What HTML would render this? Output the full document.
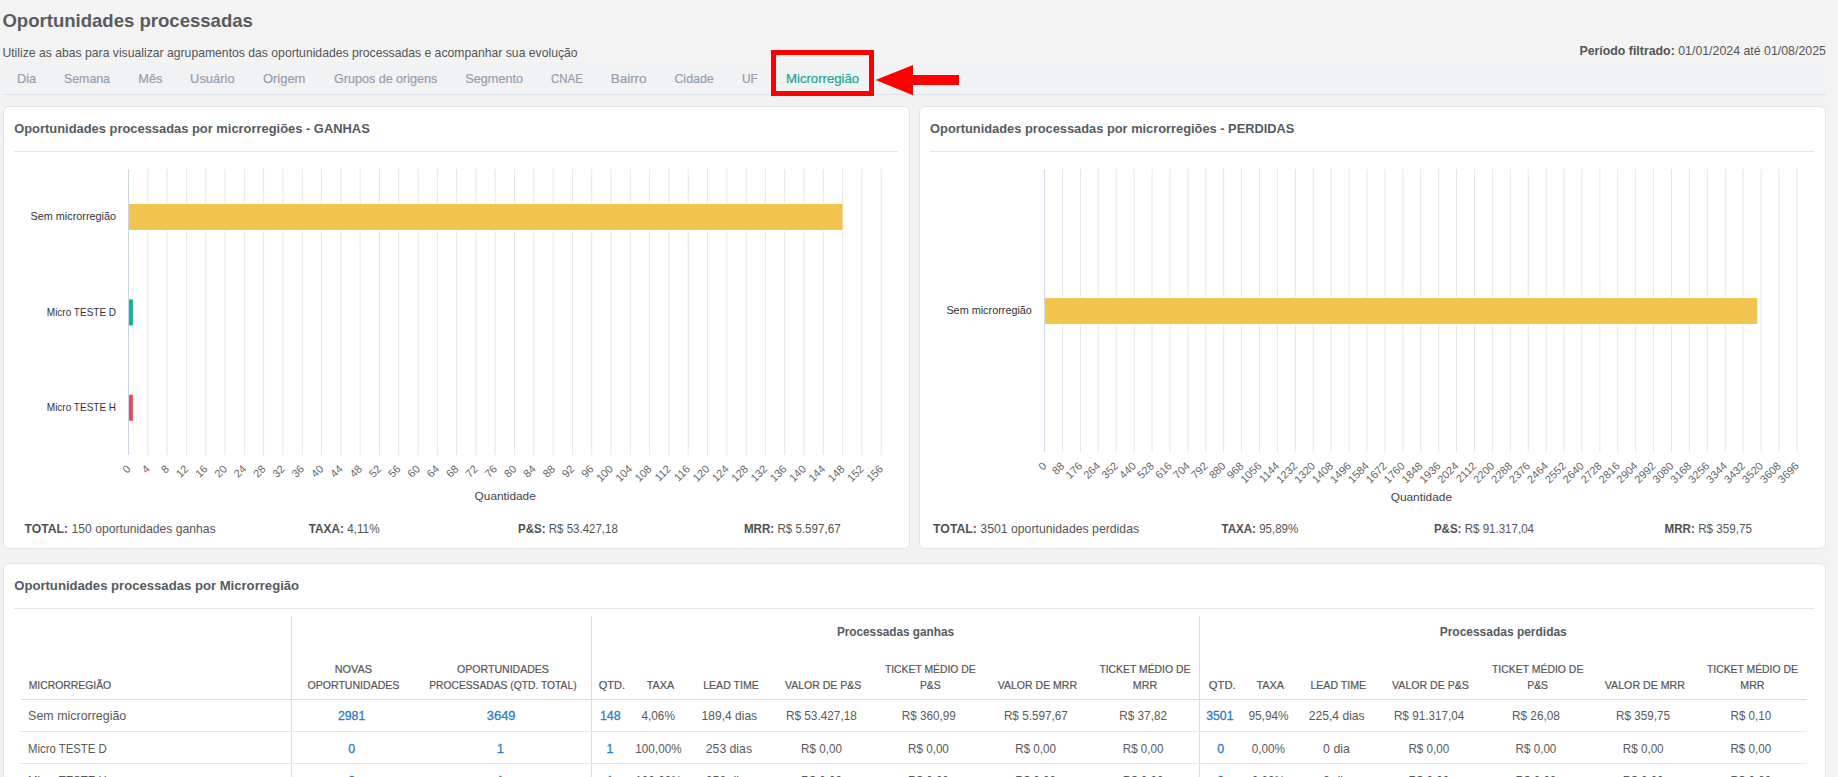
<!DOCTYPE html>
<html><head><meta charset="utf-8"><title>Oportunidades processadas</title>
<style>
*{margin:0;padding:0;box-sizing:border-box}
html,body{width:1838px;height:777px;overflow:hidden;background:#f3f3f3;font-family:"Liberation Sans",sans-serif}
.abs{position:absolute}
.card{position:absolute;background:#fff;border:1px solid #e4e4e4;border-radius:6px}
svg{position:absolute;left:0;top:0}
svg text{font-family:"Liberation Sans",sans-serif}
</style></head>
<body>
<div class="abs" style="left:3px;top:63px;width:1823px;height:714px;background:#f1f2f4"></div>
<div class="abs" style="left:3px;top:94px;width:1823px;height:1px;background:#dde3ea"></div>
<div class="card" style="left:3px;top:106px;width:907px;height:443px"></div>
<div class="card" style="left:919px;top:106px;width:907px;height:443px"></div>
<div class="card" style="left:3px;top:563px;width:1823px;height:300px"></div>
<div class="abs" style="left:14px;top:151px;width:884px;height:1px;background:#e6e6e6"></div>
<div class="abs" style="left:930px;top:151px;width:884px;height:1px;background:#e6e6e6"></div>
<div class="abs" style="left:14px;top:608px;width:1800px;height:1px;background:#e6e6e6"></div>
<div class="abs" style="left:771px;top:50px;width:103px;height:46px;border:5px solid #fe0000"></div>
<div class="abs" style="left:291px;top:616px;width:1px;height:170px;background:#dcdcdc"></div>
<div class="abs" style="left:591px;top:616px;width:1px;height:170px;background:#dcdcdc"></div>
<div class="abs" style="left:1199px;top:616px;width:1px;height:170px;background:#dcdcdc"></div>
<div class="abs" style="left:21px;top:699px;width:1786px;height:1px;background:#dcdcdc"></div>
<div class="abs" style="left:21px;top:731px;width:1786px;height:1px;background:#e4e7ea"></div>
<div class="abs" style="left:21px;top:763px;width:1786px;height:1px;background:#e4e7ea"></div>
<svg width="1838" height="777" viewBox="0 0 1838 777">
<text x="2.40" y="27" font-size="19" fill="#5a5c60" font-weight="bold" textLength="250.50" lengthAdjust="spacingAndGlyphs">Oportunidades processadas</text>
<text x="2.40" y="57" font-size="12.6" fill="#555" textLength="575.20" lengthAdjust="spacingAndGlyphs">Utilize as abas para visualizar agrupamentos das oportunidades processadas e acompanhar sua evolução</text>
<text x="1579.40" y="55" font-size="12.6" fill="#555" textLength="246.50" lengthAdjust="spacingAndGlyphs"><tspan font-weight="bold" fill="#555">Período filtrado:</tspan><tspan font-weight="normal" fill="#555"> 01/01/2024 até 01/08/2025</tspan></text>
<text x="16.90" y="83.3" font-size="12.8" fill="#979eac" stroke="#979eac" stroke-width="0.2" textLength="19.20" lengthAdjust="spacingAndGlyphs">Dia</text>
<text x="64.00" y="83.3" font-size="12.8" fill="#979eac" stroke="#979eac" stroke-width="0.2" textLength="46.00" lengthAdjust="spacingAndGlyphs">Semana</text>
<text x="138.30" y="83.3" font-size="12.8" fill="#979eac" stroke="#979eac" stroke-width="0.2" textLength="24.20" lengthAdjust="spacingAndGlyphs">Mês</text>
<text x="190.10" y="83.3" font-size="12.8" fill="#979eac" stroke="#979eac" stroke-width="0.2" textLength="44.50" lengthAdjust="spacingAndGlyphs">Usuário</text>
<text x="262.90" y="83.3" font-size="12.8" fill="#979eac" stroke="#979eac" stroke-width="0.2" textLength="42.50" lengthAdjust="spacingAndGlyphs">Origem</text>
<text x="334.00" y="83.3" font-size="12.8" fill="#979eac" stroke="#979eac" stroke-width="0.2" textLength="103.30" lengthAdjust="spacingAndGlyphs">Grupos de origens</text>
<text x="465.30" y="83.3" font-size="12.8" fill="#979eac" stroke="#979eac" stroke-width="0.2" textLength="57.80" lengthAdjust="spacingAndGlyphs">Segmento</text>
<text x="551.00" y="83.3" font-size="12.8" fill="#979eac" stroke="#979eac" stroke-width="0.2" textLength="31.80" lengthAdjust="spacingAndGlyphs">CNAE</text>
<text x="610.70" y="83.3" font-size="12.8" fill="#979eac" stroke="#979eac" stroke-width="0.2" textLength="35.90" lengthAdjust="spacingAndGlyphs">Bairro</text>
<text x="674.40" y="83.3" font-size="12.8" fill="#979eac" stroke="#979eac" stroke-width="0.2" textLength="39.40" lengthAdjust="spacingAndGlyphs">Cidade</text>
<text x="742.00" y="83.3" font-size="12.8" fill="#979eac" stroke="#979eac" stroke-width="0.2" textLength="15.90" lengthAdjust="spacingAndGlyphs">UF</text>
<text x="786.00" y="83.3" font-size="12.8" fill="#20a693" stroke="#20a693" stroke-width="0.2" textLength="73.20" lengthAdjust="spacingAndGlyphs">Microrregião</text>
<text x="14.20" y="133.2" font-size="12.3" fill="#555b61" font-weight="bold" textLength="355.60" lengthAdjust="spacingAndGlyphs">Oportunidades processadas por microrregiões - GANHAS</text>
<text x="930.10" y="133.2" font-size="12.3" fill="#555b61" font-weight="bold" textLength="364.30" lengthAdjust="spacingAndGlyphs">Oportunidades processadas por microrregiões - PERDIDAS</text>
<text x="14.20" y="590.4" font-size="12.3" fill="#555b61" font-weight="bold" textLength="284.90" lengthAdjust="spacingAndGlyphs">Oportunidades processadas por Microrregião</text>
<line x1="128.53" y1="169" x2="128.53" y2="455" stroke="#ccd6eb" stroke-width="1"/>
<line x1="147.83" y1="169" x2="147.83" y2="455" stroke="#e6e6e6" stroke-width="1"/>
<line x1="167.13" y1="169" x2="167.13" y2="455" stroke="#e6e6e6" stroke-width="1"/>
<line x1="186.43" y1="169" x2="186.43" y2="455" stroke="#e6e6e6" stroke-width="1"/>
<line x1="205.73" y1="169" x2="205.73" y2="455" stroke="#e6e6e6" stroke-width="1"/>
<line x1="225.03" y1="169" x2="225.03" y2="455" stroke="#e6e6e6" stroke-width="1"/>
<line x1="244.33" y1="169" x2="244.33" y2="455" stroke="#e6e6e6" stroke-width="1"/>
<line x1="263.63" y1="169" x2="263.63" y2="455" stroke="#e6e6e6" stroke-width="1"/>
<line x1="282.93" y1="169" x2="282.93" y2="455" stroke="#e6e6e6" stroke-width="1"/>
<line x1="302.23" y1="169" x2="302.23" y2="455" stroke="#e6e6e6" stroke-width="1"/>
<line x1="321.53" y1="169" x2="321.53" y2="455" stroke="#e6e6e6" stroke-width="1"/>
<line x1="340.83" y1="169" x2="340.83" y2="455" stroke="#e6e6e6" stroke-width="1"/>
<line x1="360.13" y1="169" x2="360.13" y2="455" stroke="#e6e6e6" stroke-width="1"/>
<line x1="379.43" y1="169" x2="379.43" y2="455" stroke="#e6e6e6" stroke-width="1"/>
<line x1="398.73" y1="169" x2="398.73" y2="455" stroke="#e6e6e6" stroke-width="1"/>
<line x1="418.03" y1="169" x2="418.03" y2="455" stroke="#e6e6e6" stroke-width="1"/>
<line x1="437.33" y1="169" x2="437.33" y2="455" stroke="#e6e6e6" stroke-width="1"/>
<line x1="456.63" y1="169" x2="456.63" y2="455" stroke="#e6e6e6" stroke-width="1"/>
<line x1="475.93" y1="169" x2="475.93" y2="455" stroke="#e6e6e6" stroke-width="1"/>
<line x1="495.23" y1="169" x2="495.23" y2="455" stroke="#e6e6e6" stroke-width="1"/>
<line x1="514.53" y1="169" x2="514.53" y2="455" stroke="#e6e6e6" stroke-width="1"/>
<line x1="533.83" y1="169" x2="533.83" y2="455" stroke="#e6e6e6" stroke-width="1"/>
<line x1="553.13" y1="169" x2="553.13" y2="455" stroke="#e6e6e6" stroke-width="1"/>
<line x1="572.43" y1="169" x2="572.43" y2="455" stroke="#e6e6e6" stroke-width="1"/>
<line x1="591.73" y1="169" x2="591.73" y2="455" stroke="#e6e6e6" stroke-width="1"/>
<line x1="611.03" y1="169" x2="611.03" y2="455" stroke="#e6e6e6" stroke-width="1"/>
<line x1="630.33" y1="169" x2="630.33" y2="455" stroke="#e6e6e6" stroke-width="1"/>
<line x1="649.63" y1="169" x2="649.63" y2="455" stroke="#e6e6e6" stroke-width="1"/>
<line x1="668.93" y1="169" x2="668.93" y2="455" stroke="#e6e6e6" stroke-width="1"/>
<line x1="688.23" y1="169" x2="688.23" y2="455" stroke="#e6e6e6" stroke-width="1"/>
<line x1="707.53" y1="169" x2="707.53" y2="455" stroke="#e6e6e6" stroke-width="1"/>
<line x1="726.83" y1="169" x2="726.83" y2="455" stroke="#e6e6e6" stroke-width="1"/>
<line x1="746.13" y1="169" x2="746.13" y2="455" stroke="#e6e6e6" stroke-width="1"/>
<line x1="765.43" y1="169" x2="765.43" y2="455" stroke="#e6e6e6" stroke-width="1"/>
<line x1="784.73" y1="169" x2="784.73" y2="455" stroke="#e6e6e6" stroke-width="1"/>
<line x1="804.03" y1="169" x2="804.03" y2="455" stroke="#e6e6e6" stroke-width="1"/>
<line x1="823.33" y1="169" x2="823.33" y2="455" stroke="#e6e6e6" stroke-width="1"/>
<line x1="842.63" y1="169" x2="842.63" y2="455" stroke="#e6e6e6" stroke-width="1"/>
<line x1="861.93" y1="169" x2="861.93" y2="455" stroke="#e6e6e6" stroke-width="1"/>
<line x1="881.23" y1="169" x2="881.23" y2="455" stroke="#e6e6e6" stroke-width="1"/>
<rect x="129.03" y="203" width="713.60" height="28" fill="#fff"/>
<rect x="129.03" y="204" width="713.60" height="26" fill="#f2c54e"/>
<rect x="129.03" y="298.4" width="3.87" height="28.100000000000023" fill="#fff"/>
<rect x="129.03" y="299.4" width="3.87" height="26.100000000000023" fill="#17b28e"/>
<rect x="129.03" y="393.8" width="3.87" height="28.0" fill="#fff"/>
<rect x="129.03" y="394.8" width="3.87" height="26.0" fill="#e84a5f"/>
<text transform="translate(131.23,469.6) rotate(-45)" text-anchor="end" font-size="11" fill="#666">0</text>
<text transform="translate(150.53,469.6) rotate(-45)" text-anchor="end" font-size="11" fill="#666">4</text>
<text transform="translate(169.83,469.6) rotate(-45)" text-anchor="end" font-size="11" fill="#666">8</text>
<text transform="translate(189.13,469.6) rotate(-45)" text-anchor="end" font-size="11" fill="#666">12</text>
<text transform="translate(208.43,469.6) rotate(-45)" text-anchor="end" font-size="11" fill="#666">16</text>
<text transform="translate(227.73,469.6) rotate(-45)" text-anchor="end" font-size="11" fill="#666">20</text>
<text transform="translate(247.03,469.6) rotate(-45)" text-anchor="end" font-size="11" fill="#666">24</text>
<text transform="translate(266.33,469.6) rotate(-45)" text-anchor="end" font-size="11" fill="#666">28</text>
<text transform="translate(285.63,469.6) rotate(-45)" text-anchor="end" font-size="11" fill="#666">32</text>
<text transform="translate(304.93,469.6) rotate(-45)" text-anchor="end" font-size="11" fill="#666">36</text>
<text transform="translate(324.23,469.6) rotate(-45)" text-anchor="end" font-size="11" fill="#666">40</text>
<text transform="translate(343.53,469.6) rotate(-45)" text-anchor="end" font-size="11" fill="#666">44</text>
<text transform="translate(362.83,469.6) rotate(-45)" text-anchor="end" font-size="11" fill="#666">48</text>
<text transform="translate(382.13,469.6) rotate(-45)" text-anchor="end" font-size="11" fill="#666">52</text>
<text transform="translate(401.43,469.6) rotate(-45)" text-anchor="end" font-size="11" fill="#666">56</text>
<text transform="translate(420.73,469.6) rotate(-45)" text-anchor="end" font-size="11" fill="#666">60</text>
<text transform="translate(440.03,469.6) rotate(-45)" text-anchor="end" font-size="11" fill="#666">64</text>
<text transform="translate(459.33,469.6) rotate(-45)" text-anchor="end" font-size="11" fill="#666">68</text>
<text transform="translate(478.63,469.6) rotate(-45)" text-anchor="end" font-size="11" fill="#666">72</text>
<text transform="translate(497.93,469.6) rotate(-45)" text-anchor="end" font-size="11" fill="#666">76</text>
<text transform="translate(517.23,469.6) rotate(-45)" text-anchor="end" font-size="11" fill="#666">80</text>
<text transform="translate(536.53,469.6) rotate(-45)" text-anchor="end" font-size="11" fill="#666">84</text>
<text transform="translate(555.83,469.6) rotate(-45)" text-anchor="end" font-size="11" fill="#666">88</text>
<text transform="translate(575.13,469.6) rotate(-45)" text-anchor="end" font-size="11" fill="#666">92</text>
<text transform="translate(594.43,469.6) rotate(-45)" text-anchor="end" font-size="11" fill="#666">96</text>
<text transform="translate(613.73,469.6) rotate(-45)" text-anchor="end" font-size="11" fill="#666">100</text>
<text transform="translate(633.03,469.6) rotate(-45)" text-anchor="end" font-size="11" fill="#666">104</text>
<text transform="translate(652.33,469.6) rotate(-45)" text-anchor="end" font-size="11" fill="#666">108</text>
<text transform="translate(671.63,469.6) rotate(-45)" text-anchor="end" font-size="11" fill="#666">112</text>
<text transform="translate(690.93,469.6) rotate(-45)" text-anchor="end" font-size="11" fill="#666">116</text>
<text transform="translate(710.23,469.6) rotate(-45)" text-anchor="end" font-size="11" fill="#666">120</text>
<text transform="translate(729.53,469.6) rotate(-45)" text-anchor="end" font-size="11" fill="#666">124</text>
<text transform="translate(748.83,469.6) rotate(-45)" text-anchor="end" font-size="11" fill="#666">128</text>
<text transform="translate(768.13,469.6) rotate(-45)" text-anchor="end" font-size="11" fill="#666">132</text>
<text transform="translate(787.43,469.6) rotate(-45)" text-anchor="end" font-size="11" fill="#666">136</text>
<text transform="translate(806.73,469.6) rotate(-45)" text-anchor="end" font-size="11" fill="#666">140</text>
<text transform="translate(826.03,469.6) rotate(-45)" text-anchor="end" font-size="11" fill="#666">144</text>
<text transform="translate(845.33,469.6) rotate(-45)" text-anchor="end" font-size="11" fill="#666">148</text>
<text transform="translate(864.63,469.6) rotate(-45)" text-anchor="end" font-size="11" fill="#666">152</text>
<text transform="translate(883.93,469.6) rotate(-45)" text-anchor="end" font-size="11" fill="#666">156</text>
<line x1="1044.57" y1="169" x2="1044.57" y2="452" stroke="#ccd6eb" stroke-width="1"/>
<line x1="1062.48" y1="169" x2="1062.48" y2="452" stroke="#e6e6e6" stroke-width="1"/>
<line x1="1080.40" y1="169" x2="1080.40" y2="452" stroke="#e6e6e6" stroke-width="1"/>
<line x1="1098.31" y1="169" x2="1098.31" y2="452" stroke="#e6e6e6" stroke-width="1"/>
<line x1="1116.22" y1="169" x2="1116.22" y2="452" stroke="#e6e6e6" stroke-width="1"/>
<line x1="1134.13" y1="169" x2="1134.13" y2="452" stroke="#e6e6e6" stroke-width="1"/>
<line x1="1152.05" y1="169" x2="1152.05" y2="452" stroke="#e6e6e6" stroke-width="1"/>
<line x1="1169.96" y1="169" x2="1169.96" y2="452" stroke="#e6e6e6" stroke-width="1"/>
<line x1="1187.87" y1="169" x2="1187.87" y2="452" stroke="#e6e6e6" stroke-width="1"/>
<line x1="1205.79" y1="169" x2="1205.79" y2="452" stroke="#e6e6e6" stroke-width="1"/>
<line x1="1223.70" y1="169" x2="1223.70" y2="452" stroke="#e6e6e6" stroke-width="1"/>
<line x1="1241.61" y1="169" x2="1241.61" y2="452" stroke="#e6e6e6" stroke-width="1"/>
<line x1="1259.53" y1="169" x2="1259.53" y2="452" stroke="#e6e6e6" stroke-width="1"/>
<line x1="1277.44" y1="169" x2="1277.44" y2="452" stroke="#e6e6e6" stroke-width="1"/>
<line x1="1295.35" y1="169" x2="1295.35" y2="452" stroke="#e6e6e6" stroke-width="1"/>
<line x1="1313.26" y1="169" x2="1313.26" y2="452" stroke="#e6e6e6" stroke-width="1"/>
<line x1="1331.18" y1="169" x2="1331.18" y2="452" stroke="#e6e6e6" stroke-width="1"/>
<line x1="1349.09" y1="169" x2="1349.09" y2="452" stroke="#e6e6e6" stroke-width="1"/>
<line x1="1367.00" y1="169" x2="1367.00" y2="452" stroke="#e6e6e6" stroke-width="1"/>
<line x1="1384.92" y1="169" x2="1384.92" y2="452" stroke="#e6e6e6" stroke-width="1"/>
<line x1="1402.83" y1="169" x2="1402.83" y2="452" stroke="#e6e6e6" stroke-width="1"/>
<line x1="1420.74" y1="169" x2="1420.74" y2="452" stroke="#e6e6e6" stroke-width="1"/>
<line x1="1438.66" y1="169" x2="1438.66" y2="452" stroke="#e6e6e6" stroke-width="1"/>
<line x1="1456.57" y1="169" x2="1456.57" y2="452" stroke="#e6e6e6" stroke-width="1"/>
<line x1="1474.48" y1="169" x2="1474.48" y2="452" stroke="#e6e6e6" stroke-width="1"/>
<line x1="1492.39" y1="169" x2="1492.39" y2="452" stroke="#e6e6e6" stroke-width="1"/>
<line x1="1510.31" y1="169" x2="1510.31" y2="452" stroke="#e6e6e6" stroke-width="1"/>
<line x1="1528.22" y1="169" x2="1528.22" y2="452" stroke="#e6e6e6" stroke-width="1"/>
<line x1="1546.13" y1="169" x2="1546.13" y2="452" stroke="#e6e6e6" stroke-width="1"/>
<line x1="1564.05" y1="169" x2="1564.05" y2="452" stroke="#e6e6e6" stroke-width="1"/>
<line x1="1581.96" y1="169" x2="1581.96" y2="452" stroke="#e6e6e6" stroke-width="1"/>
<line x1="1599.87" y1="169" x2="1599.87" y2="452" stroke="#e6e6e6" stroke-width="1"/>
<line x1="1617.79" y1="169" x2="1617.79" y2="452" stroke="#e6e6e6" stroke-width="1"/>
<line x1="1635.70" y1="169" x2="1635.70" y2="452" stroke="#e6e6e6" stroke-width="1"/>
<line x1="1653.61" y1="169" x2="1653.61" y2="452" stroke="#e6e6e6" stroke-width="1"/>
<line x1="1671.53" y1="169" x2="1671.53" y2="452" stroke="#e6e6e6" stroke-width="1"/>
<line x1="1689.44" y1="169" x2="1689.44" y2="452" stroke="#e6e6e6" stroke-width="1"/>
<line x1="1707.35" y1="169" x2="1707.35" y2="452" stroke="#e6e6e6" stroke-width="1"/>
<line x1="1725.26" y1="169" x2="1725.26" y2="452" stroke="#e6e6e6" stroke-width="1"/>
<line x1="1743.18" y1="169" x2="1743.18" y2="452" stroke="#e6e6e6" stroke-width="1"/>
<line x1="1761.09" y1="169" x2="1761.09" y2="452" stroke="#e6e6e6" stroke-width="1"/>
<line x1="1779.00" y1="169" x2="1779.00" y2="452" stroke="#e6e6e6" stroke-width="1"/>
<line x1="1796.92" y1="169" x2="1796.92" y2="452" stroke="#e6e6e6" stroke-width="1"/>
<rect x="1045.07" y="297" width="712.15" height="28" fill="#fff"/>
<rect x="1045.07" y="298" width="712.15" height="26" fill="#f2c54e"/>
<text transform="translate(1047.27,466.6) rotate(-45)" text-anchor="end" font-size="11" fill="#666">0</text>
<text transform="translate(1065.18,466.6) rotate(-45)" text-anchor="end" font-size="11" fill="#666">88</text>
<text transform="translate(1083.10,466.6) rotate(-45)" text-anchor="end" font-size="11" fill="#666">176</text>
<text transform="translate(1101.01,466.6) rotate(-45)" text-anchor="end" font-size="11" fill="#666">264</text>
<text transform="translate(1118.92,466.6) rotate(-45)" text-anchor="end" font-size="11" fill="#666">352</text>
<text transform="translate(1136.84,466.6) rotate(-45)" text-anchor="end" font-size="11" fill="#666">440</text>
<text transform="translate(1154.75,466.6) rotate(-45)" text-anchor="end" font-size="11" fill="#666">528</text>
<text transform="translate(1172.66,466.6) rotate(-45)" text-anchor="end" font-size="11" fill="#666">616</text>
<text transform="translate(1190.57,466.6) rotate(-45)" text-anchor="end" font-size="11" fill="#666">704</text>
<text transform="translate(1208.49,466.6) rotate(-45)" text-anchor="end" font-size="11" fill="#666">792</text>
<text transform="translate(1226.40,466.6) rotate(-45)" text-anchor="end" font-size="11" fill="#666">880</text>
<text transform="translate(1244.31,466.6) rotate(-45)" text-anchor="end" font-size="11" fill="#666">968</text>
<text transform="translate(1262.23,466.6) rotate(-45)" text-anchor="end" font-size="11" fill="#666">1056</text>
<text transform="translate(1280.14,466.6) rotate(-45)" text-anchor="end" font-size="11" fill="#666">1144</text>
<text transform="translate(1298.05,466.6) rotate(-45)" text-anchor="end" font-size="11" fill="#666">1232</text>
<text transform="translate(1315.96,466.6) rotate(-45)" text-anchor="end" font-size="11" fill="#666">1320</text>
<text transform="translate(1333.88,466.6) rotate(-45)" text-anchor="end" font-size="11" fill="#666">1408</text>
<text transform="translate(1351.79,466.6) rotate(-45)" text-anchor="end" font-size="11" fill="#666">1496</text>
<text transform="translate(1369.70,466.6) rotate(-45)" text-anchor="end" font-size="11" fill="#666">1584</text>
<text transform="translate(1387.62,466.6) rotate(-45)" text-anchor="end" font-size="11" fill="#666">1672</text>
<text transform="translate(1405.53,466.6) rotate(-45)" text-anchor="end" font-size="11" fill="#666">1760</text>
<text transform="translate(1423.44,466.6) rotate(-45)" text-anchor="end" font-size="11" fill="#666">1848</text>
<text transform="translate(1441.36,466.6) rotate(-45)" text-anchor="end" font-size="11" fill="#666">1936</text>
<text transform="translate(1459.27,466.6) rotate(-45)" text-anchor="end" font-size="11" fill="#666">2024</text>
<text transform="translate(1477.18,466.6) rotate(-45)" text-anchor="end" font-size="11" fill="#666">2112</text>
<text transform="translate(1495.10,466.6) rotate(-45)" text-anchor="end" font-size="11" fill="#666">2200</text>
<text transform="translate(1513.01,466.6) rotate(-45)" text-anchor="end" font-size="11" fill="#666">2288</text>
<text transform="translate(1530.92,466.6) rotate(-45)" text-anchor="end" font-size="11" fill="#666">2376</text>
<text transform="translate(1548.83,466.6) rotate(-45)" text-anchor="end" font-size="11" fill="#666">2464</text>
<text transform="translate(1566.75,466.6) rotate(-45)" text-anchor="end" font-size="11" fill="#666">2552</text>
<text transform="translate(1584.66,466.6) rotate(-45)" text-anchor="end" font-size="11" fill="#666">2640</text>
<text transform="translate(1602.57,466.6) rotate(-45)" text-anchor="end" font-size="11" fill="#666">2728</text>
<text transform="translate(1620.49,466.6) rotate(-45)" text-anchor="end" font-size="11" fill="#666">2816</text>
<text transform="translate(1638.40,466.6) rotate(-45)" text-anchor="end" font-size="11" fill="#666">2904</text>
<text transform="translate(1656.31,466.6) rotate(-45)" text-anchor="end" font-size="11" fill="#666">2992</text>
<text transform="translate(1674.23,466.6) rotate(-45)" text-anchor="end" font-size="11" fill="#666">3080</text>
<text transform="translate(1692.14,466.6) rotate(-45)" text-anchor="end" font-size="11" fill="#666">3168</text>
<text transform="translate(1710.05,466.6) rotate(-45)" text-anchor="end" font-size="11" fill="#666">3256</text>
<text transform="translate(1727.96,466.6) rotate(-45)" text-anchor="end" font-size="11" fill="#666">3344</text>
<text transform="translate(1745.88,466.6) rotate(-45)" text-anchor="end" font-size="11" fill="#666">3432</text>
<text transform="translate(1763.79,466.6) rotate(-45)" text-anchor="end" font-size="11" fill="#666">3520</text>
<text transform="translate(1781.70,466.6) rotate(-45)" text-anchor="end" font-size="11" fill="#666">3608</text>
<text transform="translate(1799.62,466.6) rotate(-45)" text-anchor="end" font-size="11" fill="#666">3696</text>
<text x="30.50" y="219.9" font-size="10.5" fill="#333" textLength="85.60" lengthAdjust="spacingAndGlyphs">Sem microrregião</text>
<text x="46.80" y="316" font-size="10.5" fill="#333" textLength="69.30" lengthAdjust="spacingAndGlyphs">Micro TESTE D</text>
<text x="46.80" y="411.4" font-size="10.5" fill="#333" textLength="69.30" lengthAdjust="spacingAndGlyphs">Micro TESTE H</text>
<text x="946.40" y="313.7" font-size="10.5" fill="#333" textLength="85.50" lengthAdjust="spacingAndGlyphs">Sem microrregião</text>
<text x="474.60" y="500.2" font-size="11" fill="#444" textLength="61.20" lengthAdjust="spacingAndGlyphs">Quantidade</text>
<text x="1390.70" y="501.1" font-size="11" fill="#444" textLength="61.30" lengthAdjust="spacingAndGlyphs">Quantidade</text>
<text x="24.60" y="532.7" font-size="12.2" fill="#555" textLength="191.00" lengthAdjust="spacingAndGlyphs"><tspan font-weight="bold" fill="#505050">TOTAL:</tspan><tspan font-weight="normal" fill="#555"> 150 oportunidades ganhas</tspan></text>
<text x="308.80" y="532.7" font-size="12.2" fill="#555" textLength="70.80" lengthAdjust="spacingAndGlyphs"><tspan font-weight="bold" fill="#505050">TAXA:</tspan><tspan font-weight="normal" fill="#555"> 4,11%</tspan></text>
<text x="518.10" y="532.7" font-size="12.2" fill="#555" textLength="99.70" lengthAdjust="spacingAndGlyphs"><tspan font-weight="bold" fill="#505050">P&amp;S:</tspan><tspan font-weight="normal" fill="#555"> R$ 53.427,18</tspan></text>
<text x="743.90" y="532.7" font-size="12.2" fill="#555" textLength="96.70" lengthAdjust="spacingAndGlyphs"><tspan font-weight="bold" fill="#505050">MRR:</tspan><tspan font-weight="normal" fill="#555"> R$ 5.597,67</tspan></text>
<text x="933.10" y="532.7" font-size="12.2" fill="#555" textLength="206.00" lengthAdjust="spacingAndGlyphs"><tspan font-weight="bold" fill="#505050">TOTAL:</tspan><tspan font-weight="normal" fill="#555"> 3501 oportunidades perdidas</tspan></text>
<text x="1221.60" y="532.7" font-size="12.2" fill="#555" textLength="76.70" lengthAdjust="spacingAndGlyphs"><tspan font-weight="bold" fill="#505050">TAXA:</tspan><tspan font-weight="normal" fill="#555"> 95,89%</tspan></text>
<text x="1433.90" y="532.7" font-size="12.2" fill="#555" textLength="100.10" lengthAdjust="spacingAndGlyphs"><tspan font-weight="bold" fill="#505050">P&amp;S:</tspan><tspan font-weight="normal" fill="#555"> R$ 91.317,04</tspan></text>
<text x="1664.50" y="532.7" font-size="12.2" fill="#555" textLength="87.40" lengthAdjust="spacingAndGlyphs"><tspan font-weight="bold" fill="#505050">MRR:</tspan><tspan font-weight="normal" fill="#555"> R$ 359,75</tspan></text>
<polygon points="875.6,80 913,64.9 913,75 959,75 959,85 913,85 913,95.2" fill="#fe0000"/>
<text x="28.70" y="689" font-size="11.2" fill="#555" stroke="#555" stroke-width="0.2" textLength="82.50" lengthAdjust="spacingAndGlyphs">MICRORREGIÃO</text>
<text x="334.70" y="673.2" font-size="11.2" fill="#555" stroke="#555" stroke-width="0.2" textLength="37.30" lengthAdjust="spacingAndGlyphs">NOVAS</text>
<text x="307.50" y="689" font-size="11.2" fill="#555" stroke="#555" stroke-width="0.2" textLength="91.90" lengthAdjust="spacingAndGlyphs">OPORTUNIDADES</text>
<text x="457.10" y="673.2" font-size="11.2" fill="#555" stroke="#555" stroke-width="0.2" textLength="91.80" lengthAdjust="spacingAndGlyphs">OPORTUNIDADES</text>
<text x="429.20" y="689" font-size="11.2" fill="#555" stroke="#555" stroke-width="0.2" textLength="147.40" lengthAdjust="spacingAndGlyphs">PROCESSADAS (QTD. TOTAL)</text>
<text x="836.90" y="635.9" font-size="12.3" fill="#555b61" font-weight="bold" textLength="117.10" lengthAdjust="spacingAndGlyphs">Processadas ganhas</text>
<text x="1439.70" y="635.9" font-size="12.3" fill="#555b61" font-weight="bold" textLength="127.10" lengthAdjust="spacingAndGlyphs">Processadas perdidas</text>
<text x="598.70" y="689" font-size="11.2" fill="#555" stroke="#555" stroke-width="0.2" textLength="26.50" lengthAdjust="spacingAndGlyphs">QTD.</text>
<text x="646.70" y="689" font-size="11.2" fill="#555" stroke="#555" stroke-width="0.2" textLength="27.40" lengthAdjust="spacingAndGlyphs">TAXA</text>
<text x="703.20" y="689" font-size="11.2" fill="#555" stroke="#555" stroke-width="0.2" textLength="55.60" lengthAdjust="spacingAndGlyphs">LEAD TIME</text>
<text x="785.00" y="689" font-size="11.2" fill="#555" stroke="#555" stroke-width="0.2" textLength="76.30" lengthAdjust="spacingAndGlyphs">VALOR DE P&amp;S</text>
<text x="997.80" y="689" font-size="11.2" fill="#555" stroke="#555" stroke-width="0.2" textLength="79.20" lengthAdjust="spacingAndGlyphs">VALOR DE MRR</text>
<text x="884.90" y="673" font-size="11.2" fill="#555" stroke="#555" stroke-width="0.2" textLength="90.70" lengthAdjust="spacingAndGlyphs">TICKET MÉDIO DE</text>
<text x="919.90" y="689" font-size="11.2" fill="#555" stroke="#555" stroke-width="0.2" textLength="20.80" lengthAdjust="spacingAndGlyphs">P&amp;S</text>
<text x="1099.40" y="673" font-size="11.2" fill="#555" stroke="#555" stroke-width="0.2" textLength="91.00" lengthAdjust="spacingAndGlyphs">TICKET MÉDIO DE</text>
<text x="1132.80" y="689" font-size="11.2" fill="#555" stroke="#555" stroke-width="0.2" textLength="24.30" lengthAdjust="spacingAndGlyphs">MRR</text>
<text x="1208.80" y="689" font-size="11.2" fill="#555" stroke="#555" stroke-width="0.2" textLength="26.90" lengthAdjust="spacingAndGlyphs">QTD.</text>
<text x="1256.40" y="689" font-size="11.2" fill="#555" stroke="#555" stroke-width="0.2" textLength="27.60" lengthAdjust="spacingAndGlyphs">TAXA</text>
<text x="1310.40" y="689" font-size="11.2" fill="#555" stroke="#555" stroke-width="0.2" textLength="55.80" lengthAdjust="spacingAndGlyphs">LEAD TIME</text>
<text x="1392.10" y="689" font-size="11.2" fill="#555" stroke="#555" stroke-width="0.2" textLength="76.70" lengthAdjust="spacingAndGlyphs">VALOR DE P&amp;S</text>
<text x="1604.80" y="689" font-size="11.2" fill="#555" stroke="#555" stroke-width="0.2" textLength="80.20" lengthAdjust="spacingAndGlyphs">VALOR DE MRR</text>
<text x="1491.90" y="673" font-size="11.2" fill="#555" stroke="#555" stroke-width="0.2" textLength="91.50" lengthAdjust="spacingAndGlyphs">TICKET MÉDIO DE</text>
<text x="1527.25" y="689" font-size="11.2" fill="#555" stroke="#555" stroke-width="0.2" textLength="20.80" lengthAdjust="spacingAndGlyphs">P&amp;S</text>
<text x="1707.00" y="673" font-size="11.2" fill="#555" stroke="#555" stroke-width="0.2" textLength="90.80" lengthAdjust="spacingAndGlyphs">TICKET MÉDIO DE</text>
<text x="1740.25" y="689" font-size="11.2" fill="#555" stroke="#555" stroke-width="0.2" textLength="24.30" lengthAdjust="spacingAndGlyphs">MRR</text>
<text x="28.10" y="720.2" font-size="12.4" fill="#5a5a5a" textLength="98.20" lengthAdjust="spacingAndGlyphs">Sem microrregião</text>
<text x="28.10" y="752.8" font-size="12.4" fill="#5a5a5a" textLength="78.60" lengthAdjust="spacingAndGlyphs">Micro TESTE D</text>
<text x="28.10" y="784.8" font-size="12.4" fill="#5a5a5a" textLength="78.60" lengthAdjust="spacingAndGlyphs">Micro TESTE H</text>
<text x="337.95" y="720.2" font-size="12.4" fill="#2a7ec5" stroke="#2a7ec5" stroke-width="0.3" textLength="27.30" lengthAdjust="spacingAndGlyphs">2981</text>
<text x="486.85" y="720.2" font-size="12.4" fill="#2a7ec5" stroke="#2a7ec5" stroke-width="0.3" textLength="28.70" lengthAdjust="spacingAndGlyphs">3649</text>
<text x="599.90" y="720.2" font-size="12.4" fill="#2a7ec5" stroke="#2a7ec5" stroke-width="0.3" textLength="20.70" lengthAdjust="spacingAndGlyphs">148</text>
<text x="641.40" y="720.2" font-size="12.4" fill="#5a5a5a" textLength="33.50" lengthAdjust="spacingAndGlyphs">4,06%</text>
<text x="701.60" y="720.2" font-size="12.4" fill="#5a5a5a" textLength="55.50" lengthAdjust="spacingAndGlyphs">189,4 dias</text>
<text x="785.90" y="720.2" font-size="12.4" fill="#5a5a5a" textLength="70.90" lengthAdjust="spacingAndGlyphs">R$ 53.427,18</text>
<text x="901.70" y="720.2" font-size="12.4" fill="#5a5a5a" textLength="54.10" lengthAdjust="spacingAndGlyphs">R$ 360,99</text>
<text x="1003.90" y="720.2" font-size="12.4" fill="#5a5a5a" textLength="63.90" lengthAdjust="spacingAndGlyphs">R$ 5.597,67</text>
<text x="1119.30" y="720.2" font-size="12.4" fill="#5a5a5a" textLength="47.70" lengthAdjust="spacingAndGlyphs">R$ 37,82</text>
<text x="1206.20" y="720.2" font-size="12.4" fill="#2a7ec5" stroke="#2a7ec5" stroke-width="0.3" textLength="27.30" lengthAdjust="spacingAndGlyphs">3501</text>
<text x="1248.40" y="720.2" font-size="12.4" fill="#5a5a5a" textLength="40.30" lengthAdjust="spacingAndGlyphs">95,94%</text>
<text x="1308.80" y="720.2" font-size="12.4" fill="#5a5a5a" textLength="55.80" lengthAdjust="spacingAndGlyphs">225,4 dias</text>
<text x="1393.90" y="720.2" font-size="12.4" fill="#5a5a5a" textLength="70.40" lengthAdjust="spacingAndGlyphs">R$ 91.317,04</text>
<text x="1512.00" y="720.2" font-size="12.4" fill="#5a5a5a" textLength="47.90" lengthAdjust="spacingAndGlyphs">R$ 26,08</text>
<text x="1616.10" y="720.2" font-size="12.4" fill="#5a5a5a" textLength="53.80" lengthAdjust="spacingAndGlyphs">R$ 359,75</text>
<text x="1730.50" y="720.2" font-size="12.4" fill="#5a5a5a" textLength="40.70" lengthAdjust="spacingAndGlyphs">R$ 0,10</text>
<text x="351.60" y="752.8" font-size="12.4" fill="#2a7ec5" text-anchor="middle" stroke="#2a7ec5" stroke-width="0.3">0</text>
<text x="500.50" y="752.8" font-size="12.4" fill="#2a7ec5" text-anchor="middle" stroke="#2a7ec5" stroke-width="0.3">1</text>
<text x="609.85" y="752.8" font-size="12.4" fill="#2a7ec5" text-anchor="middle" stroke="#2a7ec5" stroke-width="0.3">1</text>
<text x="635.30" y="752.8" font-size="12.4" fill="#5a5a5a" textLength="46.40" lengthAdjust="spacingAndGlyphs">100,00%</text>
<text x="705.80" y="752.8" font-size="12.4" fill="#5a5a5a" textLength="46.20" lengthAdjust="spacingAndGlyphs">253 dias</text>
<text x="801.10" y="752.8" font-size="12.4" fill="#5a5a5a" textLength="40.80" lengthAdjust="spacingAndGlyphs">R$ 0,00</text>
<text x="908.05" y="752.8" font-size="12.4" fill="#5a5a5a" textLength="40.80" lengthAdjust="spacingAndGlyphs">R$ 0,00</text>
<text x="1015.25" y="752.8" font-size="12.4" fill="#5a5a5a" textLength="40.80" lengthAdjust="spacingAndGlyphs">R$ 0,00</text>
<text x="1122.75" y="752.8" font-size="12.4" fill="#5a5a5a" textLength="40.80" lengthAdjust="spacingAndGlyphs">R$ 0,00</text>
<text x="1220.75" y="752.8" font-size="12.4" fill="#2a7ec5" text-anchor="middle" stroke="#2a7ec5" stroke-width="0.3">0</text>
<text x="1251.70" y="752.8" font-size="12.4" fill="#5a5a5a" textLength="33.30" lengthAdjust="spacingAndGlyphs">0,00%</text>
<text x="1323.10" y="752.8" font-size="12.4" fill="#5a5a5a" textLength="26.80" lengthAdjust="spacingAndGlyphs">0 dia</text>
<text x="1408.45" y="752.8" font-size="12.4" fill="#5a5a5a" textLength="40.80" lengthAdjust="spacingAndGlyphs">R$ 0,00</text>
<text x="1515.55" y="752.8" font-size="12.4" fill="#5a5a5a" textLength="40.80" lengthAdjust="spacingAndGlyphs">R$ 0,00</text>
<text x="1622.80" y="752.8" font-size="12.4" fill="#5a5a5a" textLength="40.80" lengthAdjust="spacingAndGlyphs">R$ 0,00</text>
<text x="1730.45" y="752.8" font-size="12.4" fill="#5a5a5a" textLength="40.80" lengthAdjust="spacingAndGlyphs">R$ 0,00</text>
<text x="351.60" y="784.8" font-size="12.4" fill="#2a7ec5" text-anchor="middle" stroke="#2a7ec5" stroke-width="0.3">0</text>
<text x="500.50" y="784.8" font-size="12.4" fill="#2a7ec5" text-anchor="middle" stroke="#2a7ec5" stroke-width="0.3">1</text>
<text x="609.85" y="784.8" font-size="12.4" fill="#2a7ec5" text-anchor="middle" stroke="#2a7ec5" stroke-width="0.3">1</text>
<text x="635.30" y="784.8" font-size="12.4" fill="#5a5a5a" textLength="46.40" lengthAdjust="spacingAndGlyphs">100,00%</text>
<text x="705.80" y="784.8" font-size="12.4" fill="#5a5a5a" textLength="46.20" lengthAdjust="spacingAndGlyphs">253 dias</text>
<text x="801.10" y="784.8" font-size="12.4" fill="#5a5a5a" textLength="40.80" lengthAdjust="spacingAndGlyphs">R$ 0,00</text>
<text x="908.05" y="784.8" font-size="12.4" fill="#5a5a5a" textLength="40.80" lengthAdjust="spacingAndGlyphs">R$ 0,00</text>
<text x="1015.25" y="784.8" font-size="12.4" fill="#5a5a5a" textLength="40.80" lengthAdjust="spacingAndGlyphs">R$ 0,00</text>
<text x="1122.75" y="784.8" font-size="12.4" fill="#5a5a5a" textLength="40.80" lengthAdjust="spacingAndGlyphs">R$ 0,00</text>
<text x="1220.75" y="784.8" font-size="12.4" fill="#2a7ec5" text-anchor="middle" stroke="#2a7ec5" stroke-width="0.3">0</text>
<text x="1251.70" y="784.8" font-size="12.4" fill="#5a5a5a" textLength="33.30" lengthAdjust="spacingAndGlyphs">0,00%</text>
<text x="1323.10" y="784.8" font-size="12.4" fill="#5a5a5a" textLength="26.80" lengthAdjust="spacingAndGlyphs">0 dia</text>
<text x="1408.45" y="784.8" font-size="12.4" fill="#5a5a5a" textLength="40.80" lengthAdjust="spacingAndGlyphs">R$ 0,00</text>
<text x="1515.55" y="784.8" font-size="12.4" fill="#5a5a5a" textLength="40.80" lengthAdjust="spacingAndGlyphs">R$ 0,00</text>
<text x="1622.80" y="784.8" font-size="12.4" fill="#5a5a5a" textLength="40.80" lengthAdjust="spacingAndGlyphs">R$ 0,00</text>
<text x="1730.45" y="784.8" font-size="12.4" fill="#5a5a5a" textLength="40.80" lengthAdjust="spacingAndGlyphs">R$ 0,00</text>
</svg>
</body></html>
